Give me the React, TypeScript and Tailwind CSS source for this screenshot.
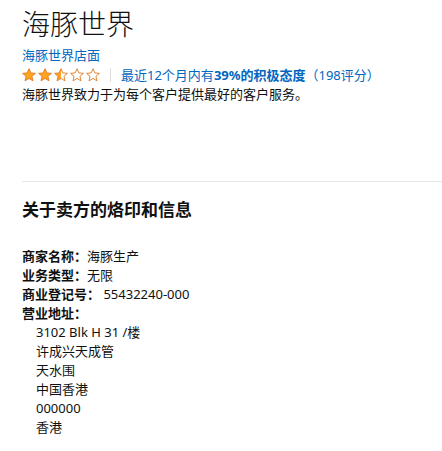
import React from "react";

const STAR = "M7 0.7 L8.85 4.95 L13.4 5.35 L9.95 8.35 L10.95 12.8 L7 10.45 L3.05 12.8 L4.05 8.35 L0.6 5.35 L5.15 4.95 Z";

function Star({ kind, id }: { kind: "full" | "half" | "empty"; id: string }) {
  return (
    <svg width="14" height="14" viewBox="0 0 14 14" className="block">
      <defs>
        <linearGradient id={id} x1="0" x2="1" y1="0" y2="0">
          <stop offset="50%" stopColor="#FFA41C" />
          <stop offset="50%" stopColor="#ffffff" />
        </linearGradient>
      </defs>
      <path
        d={STAR}
        fill={kind === "full" ? "#FFA41C" : kind === "half" ? `url(#${id})` : "#ffffff"}
        stroke="#DE7921"
        strokeWidth="0.9"
        strokeLinejoin="round"
      />
    </svg>
  );
}

export default function App() {
  const font = { fontFamily: '"Noto Sans", "Noto Sans CJK SC", sans-serif' };
  return (
    <div className="min-h-[451px] bg-white text-[#0F1111]" style={font}>
      <div className="pl-[22px] pt-[6px]">
        <h1 className="text-[28px] leading-[36px] font-light m-0">海豚世界</h1>
        <div className="mt-[4px] text-[13px] leading-[19.5px] text-[#0066c0]">海豚世界店面</div>
        <div className="flex items-center text-[13px] leading-[19.5px]">
          <div className="flex items-center gap-[2px]">
            <Star kind="full" id="s1" />
            <Star kind="full" id="s2" />
            <Star kind="half" id="s3" />
            <Star kind="empty" id="s4" />
            <Star kind="empty" id="s5" />
          </div>
          <div className="mx-[10px] h-[14px] w-px bg-[#ddd]" />
          <div className="text-[#0066c0]">
            最近12个月内有<span className="font-bold">39%的积极态度</span>（198评分）
          </div>
        </div>
        <div className="text-[13px] leading-[19.5px]">海豚世界致力于为每个客户提供最好的客户服务。</div>
      </div>
      <div className="ml-[22px] mt-[76px] h-px bg-[#e7e7e7]" />
      <div className="pl-[22px]">
        <h2 className="mt-[16px] text-[17px] leading-[24px] font-bold">关于卖方的烙印和信息</h2>
        <div className="mt-[25px] text-[13px] leading-[19px]">
          <div><span className="font-bold">商家名称：</span>海豚生产</div>
          <div><span className="font-bold">业务类型：</span>无限</div>
          <div><span className="font-bold">商业登记号：</span> 55432240-000</div>
          <div><span className="font-bold">营业地址：</span></div>
          <div className="pl-[14px]">
            <div>3102 Blk H 31 /楼</div>
            <div>许成兴天成管</div>
            <div>天水围</div>
            <div>中国香港</div>
            <div>000000</div>
            <div>香港</div>
          </div>
        </div>
      </div>
    </div>
  );
}
